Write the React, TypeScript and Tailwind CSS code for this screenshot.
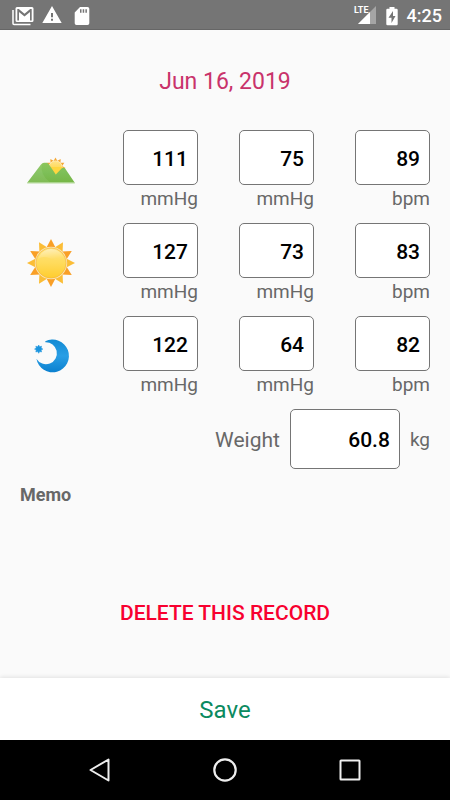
import { useState } from "react";
import type { ReactNode } from "react";

function HillIcon() {
  const rays = [-93, -62, -31, 0, 31, 62, 93];

  return (
    <svg width="48" height="48" viewBox="0 0 48 48" aria-hidden="true">
      <defs>
        <linearGradient id="hill" x1="0" y1="0" x2="0" y2="1">
          <stop offset="0" stopColor="#8cc65c" />
          <stop offset="0.5" stopColor="#7dbf58" />
          <stop offset="1" stopColor="#76b646" />
        </linearGradient>
        <linearGradient id="rise" x1="0" y1="0" x2="0" y2="1">
          <stop offset="0" stopColor="#ffe48c" />
          <stop offset="1" stopColor="#ffd02e" />
        </linearGradient>
      </defs>
      {rays.map((angle) => (
        <path
          key={angle}
          d="M28.500 11.500L31.200 16.500h-5.400z"
          fill="#f5a732"
          transform={`rotate(${angle} 28.500 21.500)`}
        />
      ))}
      <circle cx="28.500" cy="21.500" r="7" fill="#fff0cc" />
      <circle cx="28.500" cy="21.500" r="6.500" fill="url(#rise)" />
      <path d="M21 21h15.500l-7.800 8z" fill="#ffd640" />
      <path
        d="M.4 36.500L14 18.500q1.300-1.700 3-1.700h2.500q1.500 0 2.500 1.700l6.800 10 6-6.200q1.500-1.200 3-.2L47.600 36.500z"
        fill="url(#hill)"
      />
      <path d="M15 17.200q-2.500 11 8 19H.8L14 18.500z" fill="#fff" opacity="0.08" />
      <path d="M.2 36.900h47.600" stroke="#a3d183" strokeWidth="1" />
    </svg>
  );
}

function SunIcon() {
  const rays = [0, 30, 60, 90, 120, 150, 180, 210, 240, 270, 300, 330];

  return (
    <svg width="48" height="48" viewBox="0 0 48 48" aria-hidden="true">
      <defs>
        <linearGradient id="sun" x1="0" y1="0" x2="0" y2="1">
          <stop offset="0" stopColor="#ffe27a" />
          <stop offset="0.5" stopColor="#ffdb5c" />
          <stop offset="1" stopColor="#ffcd2e" />
        </linearGradient>
        <linearGradient id="shine" x1="0" y1="0" x2="0.3" y2="1">
          <stop offset="0" stopColor="#fff" stopOpacity="0.85" />
          <stop offset="1" stopColor="#fff" stopOpacity="0.05" />
        </linearGradient>
      </defs>
      {rays.map((angle) => (
        <path
          key={angle}
          d="M24 0L28.600 8.800h-9.200z"
          fill={angle % 60 === 0 ? "#f99f26" : "#fbbd36"}
          transform={`rotate(${angle} 24 24)`}
        />
      ))}
      <circle cx="24" cy="24" r="16.200" fill="#fbe3b0" />
      <circle cx="24" cy="24" r="15.100" fill="url(#sun)" stroke="#f3b43c" strokeWidth="0.6" />
      <path
        d="M11 20Q14.500 10.500 24 10q9.500.5 13 8.500-5 4-13.500 1-8-3-12.500.5z"
        fill="url(#shine)"
        opacity="0.6"
      />
    </svg>
  );
}

function MoonIcon() {
  return (
    <svg width="48" height="48" viewBox="0 0 48 48" aria-hidden="true">
      <defs>
        <linearGradient id="moon" x1="0" y1="0" x2="0" y2="1">
          <stop offset="0" stopColor="#128ad3" />
          <stop offset="0.5" stopColor="#299ee5" />
          <stop offset="1" stopColor="#0b80cf" />
        </linearGradient>
      </defs>
      <path
        d="M18.300 9.200A16.400 16.400 0 1 1 9.400 26.800A11 11 0 1 0 18.300 10.200z"
        fill="url(#moon)"
      />
      <path
        d="M11.700 13l1 1.700 1.900-.5-.5 1.900 1.800 1-1.800 1 .5 1.900-1.900-.5-1 1.800-1-1.800-1.900.5.5-1.900-1.800-1 1.800-1-.5-1.900 1.900.5z"
        fill="#1a95df"
        stroke="#1a95df"
        strokeWidth="0.5"
      />
    </svg>
  );
}

function StatusBar() {
  return (
    <header className="flex h-[30px] items-center justify-between border-b border-[#666666] bg-[#757575] pt-0.5 pr-2 pl-3 text-white">
      <div className="flex items-center gap-2">
        <svg width="22" height="20" viewBox="0 0 22 20" aria-label="Mail">
          <path d="M1 4v13.500q0 1 1 1h16.500" fill="none" stroke="#fff" strokeWidth="1.500" />
          <path
            fillRule="evenodd"
            d="M5 1h15q1.500 0 1.500 1.500v12q0 1.500-1.500 1.500H5q-1.500 0-1.500-1.500v-12Q3.500 1 5 1zm.3 2v11.500H7V6l5.500 4.500L18 6v8.500h1.700V3h-1.500l-5.700 4.700L6.800 3z"
            fill="#fff"
          />
        </svg>
        <svg width="20" height="20" viewBox="0 0 20 20" aria-label="Warning">
          <path
            fillRule="evenodd"
            d="M10 0l9.700 17H.3zM9 7v4.300h2V7zm0 5.800v2h2v-2z"
            fill="#fff"
          />
        </svg>
        <svg className="ml-1" width="18" height="20" viewBox="0 0 18 20" aria-label="SD card">
          <path
            fillRule="evenodd"
            d="M6 1h7.500q1.800 0 1.800 1.800v14.400q0 1.800-1.800 1.800h-11Q.7 19 .7 17.200V6.500zm0 2.300v3.500h1.500V3.300zm2.700 0v3.500h1.500V3.300zm2.700 0v3.500h1.500V3.300z"
            fill="#fff"
          />
        </svg>
      </div>
      <div className="flex items-center">
        <svg width="26" height="22" viewBox="0 0 26 22" aria-label="LTE signal">
          <path d="M23 1v18H5z" fill="#a5a5a5" />
          <path d="M17 7v12H5z" fill="#fff" />
          <text
            x="1"
            y="8"
            fill="#fff"
            className="font-['Liberation_Sans_Narrow',Roboto,sans-serif] text-[9px] font-bold"
          >
            LTE
          </text>
        </svg>
        <svg className="ml-1.5" width="14" height="20" viewBox="0 0 14 20" aria-label="Battery charging">
          <path
            fillRule="evenodd"
            d="M4.500 1h5v1.800h2q1.200 0 1.200 1.200v14q0 1.200-1.200 1.200h-9Q1.300 19.200 1.300 18V4q0-1.200 1.200-1.200h2zM8 5l-4.500 6.800h3V17l4-7H8z"
            fill="#fff"
          />
        </svg>
        <span className="ml-2 text-lg leading-5 font-medium">4:25</span>
      </div>
    </header>
  );
}

type ReadingFieldProps = {
  label: string;
  unit: string;
  value: string;
  onChange: (value: string) => void;
};

function ReadingField({ label, unit, value, onChange }: ReadingFieldProps) {
  return (
    <label className="flex w-[75px] flex-col">
      <input
        className="h-[55px] w-full rounded-[5px] border border-[#757575] bg-white px-[9px] pt-0.5 text-right text-[21px] font-medium text-black"
        inputMode="numeric"
        aria-label={label}
        value={value}
        onChange={(e) => onChange(e.target.value)}
      />
      <span className="mt-0.5 text-right text-[19px] leading-6">{unit}</span>
    </label>
  );
}

const fields = [
  { name: "Systolic", unit: "mmHg" },
  { name: "Diastolic", unit: "mmHg" },
  { name: "Pulse", unit: "bpm" },
];

const periods: { name: string; icon: ReactNode }[] = [
  { name: "Morning", icon: <HillIcon /> },
  { name: "Noon", icon: <SunIcon /> },
  { name: "Night", icon: <MoonIcon /> },
];

function App() {
  const [readings, setReadings] = useState([
    ["111", "75", "89"],
    ["127", "73", "83"],
    ["122", "64", "82"],
  ]);
  const [weight, setWeight] = useState("60.8");
  const [memo, setMemo] = useState("");

  const updateReading = (row: number, col: number, value: string) => {
    setReadings(
      readings.map((r, i) =>
        i === row ? r.map((v, j) => (j === col ? value : v)) : r
      )
    );
  };

  return (
    <div className="flex min-h-screen flex-col bg-[#fafafa] font-[Roboto,sans-serif] text-[#686868]">
      <StatusBar />

      <main className="flex flex-1 flex-col px-5 pt-9">
        <h1 className="text-center text-[23px] leading-8 text-[#c9336b]">
          Jun 16, 2019
        </h1>

        <div className="mt-8 flex flex-col gap-3">
          {periods.map((period, row) => (
            <div key={period.name} className="flex justify-between">
              <div className="flex w-[62px] justify-center pt-4">
                {period.icon}
              </div>
              {fields.map((field, col) => (
                <ReadingField
                  key={field.name}
                  label={`${period.name} ${field.name}`}
                  unit={field.unit}
                  value={readings[row][col]}
                  onChange={(value) => updateReading(row, col, value)}
                />
              ))}
            </div>
          ))}
        </div>

        <div className="mt-3 flex items-center justify-end gap-[10px]">
          <label htmlFor="weight" className="pt-0.5 text-[21px] leading-7">
            Weight
          </label>
          <input
            id="weight"
            className="h-[60px] w-[110px] rounded-[5px] border border-[#757575] bg-white px-[9px] pt-0.5 text-right text-[21px] font-medium text-black"
            inputMode="decimal"
            value={weight}
            onChange={(e) => setWeight(e.target.value)}
          />
          <span className="pt-0.5 text-[19px] leading-6">kg</span>
        </div>

        <label htmlFor="memo" className="mt-3.5 text-lg leading-6 font-bold">
          Memo
        </label>
        <textarea
          id="memo"
          className="h-16 resize-none bg-transparent text-lg outline-none"
          value={memo}
          onChange={(e) => setMemo(e.target.value)}
        />

        <button
          type="button"
          className="mt-5 self-center px-4 py-2 text-[21px] leading-7 font-medium text-[#f8002f]"
        >
          DELETE THIS RECORD
        </button>
      </main>

      <button
        type="button"
        className="h-[62px] bg-white pt-0.5 text-2xl text-[#0b8a5f] shadow-[0_-1px_4px_rgba(0,0,0,0.1)]"
      >
        Save
      </button>

      <nav className="flex h-[60px] items-center justify-around bg-black px-[38px]">
        <button type="button" aria-label="Back">
          <svg width="24" height="26" viewBox="0 0 24 26">
            <path
              d="M20.500 2.500v21L2.500 13z"
              fill="none"
              stroke="#eee"
              strokeWidth="2"
              strokeLinejoin="round"
            />
          </svg>
        </button>
        <button type="button" aria-label="Home">
          <svg width="26" height="26" viewBox="0 0 26 26">
            <circle cx="13" cy="13" r="10.700" fill="none" stroke="#eee" strokeWidth="2.200" />
          </svg>
        </button>
        <button type="button" aria-label="Recent apps">
          <svg width="24" height="24" viewBox="0 0 24 24">
            <rect
              x="2.500"
              y="2.500"
              width="19"
              height="19"
              rx="0.500"
              fill="none"
              stroke="#eee"
              strokeWidth="2"
            />
          </svg>
        </button>
      </nav>
    </div>
  );
}

export default App;
